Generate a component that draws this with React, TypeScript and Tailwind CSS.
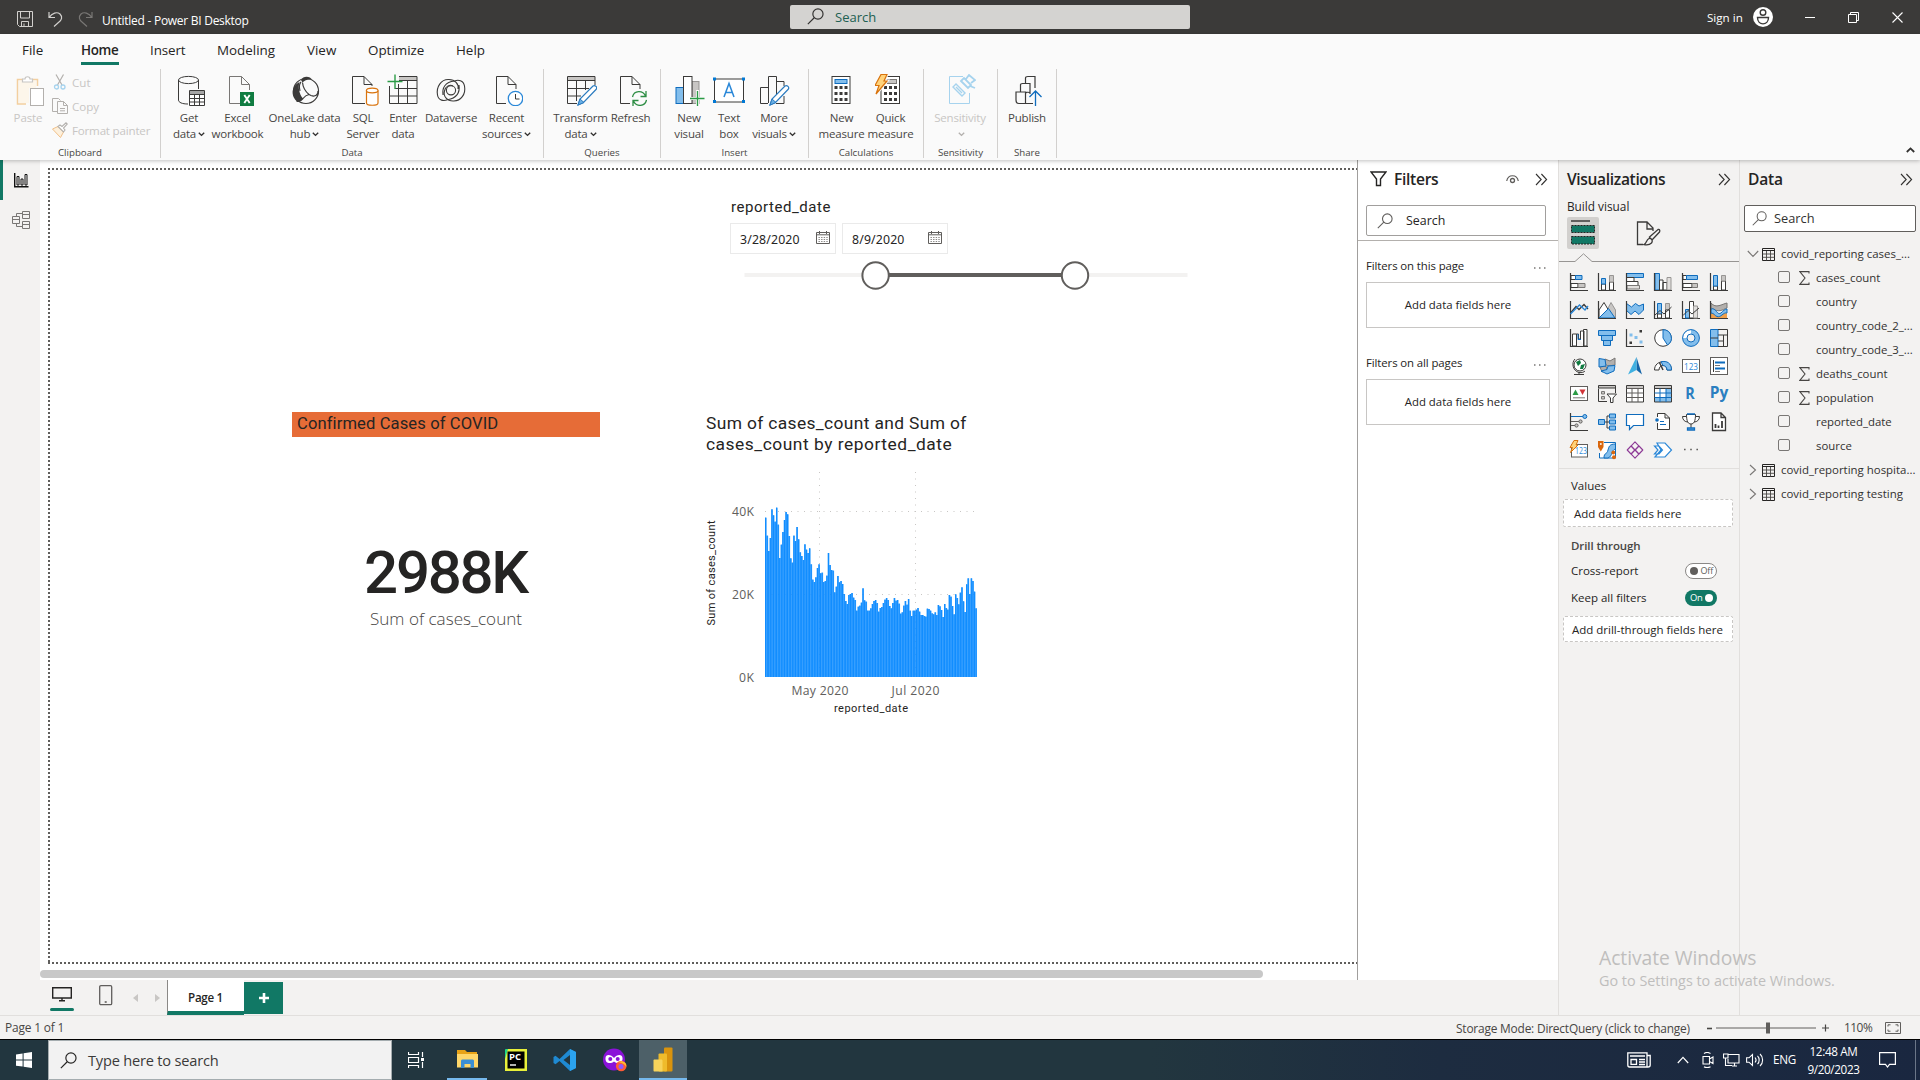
import React from "react";

type Kids = { children?: React.ReactNode };

const G = "#3b3a39";
const B = "#0078d4";
const LB = "#83beec";

/* ---------- shared glyphs ---------- */

function Svg({ w, h, className = "", children }: { w: number; h: number; className?: string } & Kids) {
  return (
    <svg width={w} height={h} viewBox={`0 0 ${w} ${h}`} fill="none" className={`shrink-0 ${className}`}>
      {children}
    </svg>
  );
}

function Magnifier({ color = "#323130", size = 16 }: { color?: string; size?: number }) {
  return (
    <svg width={size} height={size} viewBox="0 0 16 16" fill="none" stroke={color} strokeWidth="1.1" className="shrink-0">
      <circle cx="10.3" cy="5.7" r="4.8" />
      <path d="M6.8 9.2 L0.8 15.2" />
    </svg>
  );
}

function Caret({ color = "#323130" }: { color?: string }) {
  return (
    <svg width="7" height="5" viewBox="0 0 7 5" fill="none" stroke={color} strokeWidth="1.4" className="ml-[2px] inline-block align-middle">
      <path d="M0.8 0.8 L3.5 3.4 L6.2 0.8" />
    </svg>
  );
}

function DoubleChevron() {
  return (
    <Svg w={13} h={13}>
      <path d="M1 1 L6.2 6.5 L1 12 M6.4 1 L11.6 6.5 L6.4 12" stroke="#323130" strokeWidth="1.1" />
    </Svg>
  );
}

function TableGlyph() {
  return (
    <Svg w={13} h={13}>
      <path d="M0.5 0.5 H12.5 V12.5 H0.5 Z" stroke="#252423" />
      <path d="M0.5 2.5 H12.5" stroke="#252423" />
      <path d="M0.5 6 H12.5 M0.5 9.3 H12.5 M4.5 3 V12.5 M8.5 3 V12.5" stroke="#484644" strokeWidth="0.9" />
    </Svg>
  );
}

/* ---------- ribbon icons, 32 x 32 ---------- */

const ribbonIcons: Record<string, React.ReactNode> = {
  get: (
    <>
      <path d="M5.5 6 V26 C5.5 28.4 9 30 15 30 M25.5 6 V15" stroke={G} />
      <ellipse cx="15.5" cy="6" rx="10" ry="3.6" stroke={G} />
      <path d="M16.5 16.5 H31.5 V31.5 H16.5 Z" fill="#fff" stroke={G} />
      <path d="M17 17 H31 V20 H17 Z" fill="#a6a6a6" />
      <path d="M16.5 20.5 H31.5 M16.5 24.5 H31.5 M16.5 28 H31.5 M21.5 20.5 V31.5 M26.5 20.5 V31.5" stroke={G} />
    </>
  ),
  excel: (
    <>
      <path d="M18 29.5 H7.5 V2.5 H19.5 L27.5 10.5 V16 M19.5 2.5 V10.5 H27.5" stroke="#797775" />
      <rect x="18" y="18" width="14" height="14" fill="#107c41" />
      <path d="M22.3 21 L27.7 29 M27.7 21 L22.3 29" stroke="#fff" strokeWidth="1.9" />
    </>
  ),
  lake: (
    <>
      <circle cx="17" cy="17" r="12.5" stroke={G} strokeWidth="1.2" />
      <path d="M12 6 C14 1.5 21 1.5 23.5 6 C20 5 16 6 13.5 8.5 Z" fill={G} />
      <path d="M10.5 8 C9 13 10 20 14 24.5 C12 27 9.5 28 7.5 27 C0.5 20 4 11 10.5 8 Z" fill={G} />
      <path d="M13.5 8.5 C14 14 17 18 20 20.5 C17.5 21 15.5 22.5 14 24.5 C11.5 27.5 9.5 28 7.5 27 M29 17 C29.5 21 26 23 22 21.5 L20 20.5 M12 8 C10 10 10 13 11 17" stroke={G} strokeWidth="1.2" />
    </>
  ),
  sql: (
    <>
      <path d="M18 29.5 H5.5 V2.5 H17 L25 10.5 V12 M17 2.5 V10.5 H25" stroke={G} />
      <path d="M19.5 16.5 V29 C19.5 32 31 32 31 29 V16.5" fill="#fff" stroke="#d9730d" strokeWidth="1.2" />
      <ellipse cx="25.2" cy="16.5" rx="5.8" ry="2.3" fill="#fff" stroke="#d9730d" strokeWidth="1.2" />
    </>
  ),
  enter: (
    <>
      <path d="M12 2.5 H30 V6 H12 Z" fill="#c8c6c4" />
      <path d="M12 2.5 H30 V29.5 H2.5 V12 M12 6.5 H30 M8 14.5 H30 M2.5 22 H30 M11.5 10 V29.5 M20.5 6.5 V29.5" stroke={G} />
      <path d="M8 0.5 V15 M0.5 7.5 H15.5" stroke="#2b9b46" strokeWidth="1.4" />
    </>
  ),
  dv: (
    <>
      <path d="M14 5.5 C6 5 1 13 2.5 21 C3.5 27 9 27 12.5 25.8" stroke={G} strokeWidth="1.1" />
      <path d="M18 27 C26 27.5 31 20 29.5 12 C28.5 6 23 5.5 19.5 7" stroke={G} strokeWidth="1.1" />
      <path d="M14 5.5 C20 5.5 24 10 23 15 M18 27 C12 27 8 22 9.5 17 C10.5 12 15 10 18 12 M8 21 C7 14 10 8 19.5 7 M24 11 C25 18 22 24 12.5 25.8" stroke={G} strokeWidth="1.1" />
      <circle cx="16" cy="16.3" r="4.6" stroke={G} strokeWidth="1.1" />
    </>
  ),
  recent: (
    <>
      <path d="M15 29.5 H5.5 V2.5 H17 L25 10.5 V15 M17 2.5 V10.5 H25" stroke={G} />
      <circle cx="24.5" cy="24.5" r="7.2" fill="#fff" stroke="#2b88d8" strokeWidth="1.3" />
      <path d="M24.5 20 V25 H28.5" stroke={G} />
    </>
  ),
  transform: (
    <>
      <path d="M3 3 H30 V6 H3 Z" fill="#c8c6c4" />
      <path d="M30 11 V2.5 H2.5 V29.5 H12 M2.5 6.5 H30 M2.5 14.5 H24 M2.5 22 H16 M11.5 6.5 V27 M20.5 6.5 V16" stroke={G} />
      <path d="M13 31 L15 25 L28 12 C30 10.5 33 13.5 31 15.5 L18.5 28.5 Z" fill="#fff" stroke="#2b7bbf" strokeWidth="1.2" />
      <path d="M13 31 L15 25 L19 28.5 Z" fill="#69afe5" stroke="#2b7bbf" />
    </>
  ),
  refresh: (
    <>
      <path d="M15 29.5 H5.5 V2.5 H17 L25 10.5 V15 M17 2.5 V10.5 H25" stroke={G} />
      <path d="M17.5 23 C19 16 28 16 30.5 22 M31 17 V22.5 H25.5 M31.5 26 C30 33 21 33 18.5 27 M18 32 V26.5 H23.5" stroke="#2d8d44" strokeWidth="1.3" />
    </>
  ),
  visual: (
    <>
      <rect x="3" y="13.5" width="7.5" height="16" fill={LB} stroke="#0f6cbd" />
      <rect x="19" y="7.5" width="7" height="22" fill="#c8c6c4" stroke="#979593" />
      <rect x="10.5" y="2.5" width="8.5" height="27" fill="#fff" stroke={G} />
      <path d="M24.5 16 V32 M17 24.5 H32" stroke="#fafafa" strokeWidth="3" />
      <path d="M24.5 17 V32 M17 24.5 H31.5" stroke="#2b9b46" strokeWidth="1.3" />
    </>
  ),
  text: (
    <>
      <rect x="1.5" y="5" width="29" height="23" fill="#fff" stroke={G} />
      <path d="M0 3.5 H3 V6.5 H0 Z M29 3.5 H32 V6.5 H29 Z M0 26 H3 V29 H0 Z M29 26 H32 V29 H29 Z" fill={B} />
      <path d="M11 23 L16 9.5 L21 23 M12.7 18.5 H19.3" stroke="#2b88d8" strokeWidth="1.5" />
    </>
  ),
  more: (
    <>
      <path d="M10 29.5 H2.5 V13.5 H10.5 M10.5 29 V2.5 H18.5 V20 M18.5 7.5 H26 V12 M26 22 V29.5 H18" stroke={G} />
      <path d="M12 31 L14 25 L27 12 C29 10.5 32 13.5 30 15.5 L17.5 28.5 Z" fill="#fff" stroke="#2b7bbf" strokeWidth="1.2" />
      <path d="M12 31 L14 25 L18 28.5 Z" fill="#69afe5" stroke="#2b7bbf" />
    </>
  ),
  calc: (
    <>
      <rect x="6" y="2.5" width="18" height="27" fill="#fff" stroke={G} />
      <rect x="9" y="5.5" width="12" height="4" fill={LB} stroke="#0f6cbd" />
      <path d="M8.5 13.5 H21.5 M8.5 19.5 H21.5 M8.5 25.5 H21.5" stroke={G} strokeWidth="3" strokeDasharray="3 2" />
    </>
  ),
  quick: (
    <>
      <rect x="6" y="2.5" width="18.5" height="27" fill="#fff" stroke={G} />
      <rect x="12" y="5.5" width="9.5" height="4" fill="#c8c6c4" stroke="#797775" />
      <path d="M9 13.5 H22 M9 19.5 H22 M9 25.5 H22" stroke={G} strokeWidth="3" strokeDasharray="3 2" />
      <path d="M6 0.5 H12 L9 7 H12 L1 20 L4 11.5 H0 Z" fill="#ffd27a" stroke="#fafafa" strokeWidth="3" />
      <path d="M6 0.5 H12 L9 7 H12 L1 20 L4 11.5 H0 Z" fill="#ffd27a" stroke="#d9730d" strokeWidth="1.2" />
    </>
  ),
  sens: (
    <>
      <path d="M19 2.5 H5.5 V29.5 H25.5 V19" stroke="#a6d3ee" />
      <path d="M9 13 L12 10 L21 19 L18 22 Z M12 13 L18 19" stroke="#a6d3ee" strokeWidth="1.4" />
      <path d="M17 7 L24 14 L27 11 L20 4 Z M22 5 L25 1 L31 6 L27 9 M26 12 L31 14" stroke="#a6d3ee" strokeWidth="1.8" />
    </>
  ),
  publish: (
    <>
      <path d="M22 29.5 H8 C5 29.5 5 27 5 26 V18 H14.5 V29 M9.5 18 V10.5 C9.5 9.5 10.5 9.5 11.5 9.5 H19 V20 M14.5 9.5 V4 C14.5 2.5 16 2.5 17 2.5 H24 V14 M14.5 20 C14.5 18 16 18 19 18.5" stroke={G} strokeWidth="1.2" />
      <path d="M24.5 32 V17 M18.5 23 L24.5 17 L30.5 23" stroke="#0f6cbd" strokeWidth="1.3" />
    </>
  ),
};

function RibbonItem({ icon, a, b, caret, w, muted }: { icon: string; a: string; b?: string; caret?: boolean; w: string; muted?: boolean }) {
  return (
    <div className={`flex shrink-0 flex-col items-center ${w} ${muted ? "text-[#c8c6c4]" : "text-[#484644]"}`}>
      <Svg w={32} h={32}>{ribbonIcons[icon]}</Svg>
      <span className="mt-1 h-4 text-[11.5px] leading-4 tracking-[-0.2px] whitespace-nowrap">{a}</span>
      <span className="h-4 text-[11.5px] leading-4 tracking-[-0.2px] whitespace-nowrap">
        {b}
        {caret && <Caret color={muted ? "#b3b0ad" : "#323130"} />}
      </span>
    </div>
  );
}

function RibbonGroup({ label, className, items, children }: { label: string; className: string; items: string } & Kids) {
  return (
    <div className={`flex h-[89px] shrink-0 flex-col border-r border-[#d2d0ce] ${className}`}>
      <div className={`flex h-[79px] shrink-0 pt-[5px] ${items}`}>{children}</div>
      <div className="text-center text-[9.7px] leading-[10px] text-[#484644]">{label}</div>
    </div>
  );
}

function TitleBar() {
  return (
    <header className="flex h-[34px] shrink-0 items-center bg-[#3b3a39] text-white">
      <div className="flex w-[790px] items-center pt-[3px] pl-[17px]">
        <Svg w={16} h={16}>
          <path d="M0.5 0.5 H15.5 V15.5 H2.5 L0.5 13.5 Z M3.5 0.5 V7 H12.5 V0.5 M4.5 15.5 V10.5 H11.5 V15.5 M7 15 V12.5" stroke="#d2d0ce" />
        </Svg>
        <Svg w={15} h={16} className="ml-[15px]">
          <path d="M1 1 V6.5 H7 M1.2 6.3 C4 2 9 0.5 12 3 C15 6 13.5 9 11 11 L6 15.5" stroke="#d2d0ce" strokeWidth="1.2" />
        </Svg>
        <Svg w={15} h={16} className="ml-[15px]">
          <path d="M14 1 V6.5 H8 M13.8 6.3 C11 2 6 0.5 3 3 C0 6 1.5 9 4 11 L9 15.5" stroke="#797775" strokeWidth="1.2" />
        </Svg>
        <span className="mt-[5px] ml-[9px] text-[12px] leading-4 tracking-[-0.27px]">Untitled - Power BI Desktop</span>
      </div>
      <div className="mb-px flex h-6 w-[400px] items-center rounded-[2px] bg-[#d4d3d1] pl-[17px]">
        <Magnifier size={17} />
        <span className="ml-[11px] text-[13px] leading-4 text-[#215f51]">Search</span>
      </div>
      <div className="ml-[517px] flex items-center">
        <span className="w-[37px] pt-px text-[11.6px] leading-4 whitespace-nowrap">Sign in</span>
        <Svg w={20} h={20} className="-mt-px ml-[9px]">
          <circle cx="10" cy="10" r="10" fill="#fff" />
          <circle cx="10" cy="5.5" r="2.8" stroke={G} strokeWidth="1.4" />
          <path d="M4.5 10.5 H15.5 C15.5 19 4.5 19 4.5 10.5 Z" stroke={G} strokeWidth="1.4" />
        </Svg>
        <Svg w={10} h={10} className="ml-8">
          <path d="M0 5.5 H10" stroke="#fff" />
        </Svg>
        <Svg w={11} h={11} className="ml-[33px]">
          <path d="M0.5 2.5 H8.5 V10.5 H0.5 Z M2.5 2.5 V0.5 H10.5 V8.5 H8.5" stroke="#fff" />
        </Svg>
        <Svg w={11} h={11} className="ml-[33px]">
          <path d="M0.5 0.5 L10.5 10.5 M10.5 0.5 L0.5 10.5" stroke="#fff" strokeWidth="1.1" />
        </Svg>
      </div>
    </header>
  );
}

function Ribbon() {
  return (
    <section className="relative z-10 h-[126px] shrink-0 bg-[#fafafa] shadow-[0_1px_4px_rgba(0,0,0,0.25)]">
      <nav className="flex h-[35px] text-[13.4px] leading-[18px] text-[#252423] whitespace-nowrap">
        <span className="mt-[7px] ml-[22px] w-[59px]">File</span>
        <span className="mt-[7px] h-6 w-[38px] border-b-[3px] border-[#117865] font-semibold tracking-[-0.35px]">Home</span>
        <span className="mt-[7px] ml-[31px] w-[67px] tracking-[-0.1px]">Insert</span>
        <span className="mt-[7px] w-[90px]">Modeling</span>
        <span className="mt-[7px] w-[61px]">View</span>
        <span className="mt-[7px] w-[88px]">Optimize</span>
        <span className="mt-[7px]">Help</span>
      </nav>
      <div className="flex">
        <RibbonGroup label="Clipboard" className="w-[161px]" items="pl-[12px]">
          <div className="flex w-[32px] flex-col items-center text-[#c8c6c4]">
            <Svg w={32} h={32}>
              <path d="M14 30 H5.5 V5.5 H11 M20 5.5 H25.5 V12" stroke="#f3cf9f" strokeWidth="1.5" />
              <path d="M7 7 H24 V14 H17 V29 H7 Z" fill="#fdf6ea" />
              <path d="M10.5 8 V5 H13 C13 2 18 2 18 5 H20.5 V8 Z" fill="#fff" stroke="#c8c6c4" strokeWidth="1.2" />
              <rect x="18.5" y="14.5" width="13" height="17" fill="#fff" stroke="#b3b0ad" />
            </Svg>
            <span className="mt-1 text-[11.5px] leading-4 tracking-[-0.1px]">Paste</span>
          </div>
          <div className="flex flex-col pl-2 text-[11.6px] leading-6 text-[#c8c6c4]">
            <div className="-mt-1 flex h-6 items-center gap-[4px]">
              <Svg w={16} h={16}>
                <path d="M4 0.5 L10 11 M11.5 0.5 L5.5 11" stroke="#b3b0ad" strokeWidth="1.2" />
                <circle cx="4.5" cy="13" r="2" stroke="#a6d3ee" strokeWidth="1.3" />
                <circle cx="11" cy="13" r="2" stroke="#a6d3ee" strokeWidth="1.3" />
              </Svg>
              <span className="pt-px">Cut</span>
            </div>
            <div className="flex h-6 items-center gap-[4px]">
              <Svg w={16} h={16}>
                <path d="M5 13.5 H0.5 V0.5 H6.5 L8.5 2.5 M5.5 3.5 H11.5 L15.5 7.5 V15.5 H5.5 Z M11.5 3.5 V7.5 H15.5 M8 10.5 H13 M8 12.8 H13" stroke="#b3b0ad" />
              </Svg>
              <span className="pt-px">Copy</span>
            </div>
            <div className="flex h-6 items-center gap-[4px] tracking-[-0.2px]">
              <Svg w={16} h={16}>
                <path d="M0.5 7 L6 4.5 L11.5 10 L8.5 15.5 Z" fill="#fdf0dc" stroke="#f0c08a" />
                <path d="M6 4.5 L8 3 L10 4.5 L14 0.8 L15.3 2 L11.5 6 L13 8 L11.5 10 Z" fill="#fff" stroke="#b3b0ad" strokeWidth="1.1" />
              </Svg>
              <span className="pt-px whitespace-nowrap">Format painter</span>
            </div>
          </div>
        </RibbonGroup>
        <RibbonGroup label="Data" className="w-[383px]" items="pl-[6px]">
          <RibbonItem w="w-[44px]" icon="get" a="Get" b="data" caret />
          <RibbonItem w="w-[53px]" icon="excel" a="Excel" b="workbook" />
          <RibbonItem w="w-[81px]" icon="lake" a="OneLake data" b="hub" caret />
          <RibbonItem w="w-[36px]" icon="sql" a="SQL" b="Server" />
          <RibbonItem w="w-[44px]" icon="enter" a="Enter" b="data" />
          <RibbonItem w="w-[52px]" icon="dv" a="Dataverse" />
          <RibbonItem w="w-[59px]" icon="recent" a="Recent" b="sources" caret />
        </RibbonGroup>
        <RibbonGroup label="Queries" className="w-[117px]" items="pl-[6px]">
          <RibbonItem w="w-[61px]" icon="transform" a="Transform" b="data" caret />
          <RibbonItem w="w-[39px]" icon="refresh" a="Refresh" />
        </RibbonGroup>
        <RibbonGroup label="Insert" className="w-[148px]" items="pl-[13px]">
          <RibbonItem w="w-[30px]" icon="visual" a="New" b="visual" />
          <RibbonItem w="w-[50px]" icon="text" a="Text" b="box" />
          <RibbonItem w="w-[40px]" icon="more" a="More" b="visuals" caret />
        </RibbonGroup>
        <RibbonGroup label="Calculations" className="w-[115px]" items="gap-1 pl-[10px]">
          <RibbonItem w="w-[45px]" icon="calc" a="New" b="measure" />
          <RibbonItem w="w-[45px]" icon="quick" a="Quick" b="measure" />
        </RibbonGroup>
        <RibbonGroup label="Sensitivity" className="w-[74px]" items="pl-[8px]">
          <RibbonItem w="w-[56px]" icon="sens" a="Sensitivity" caret muted />
        </RibbonGroup>
        <RibbonGroup label="Share" className="w-[59px]" items="pl-[8px]">
          <RibbonItem w="w-[42px]" icon="publish" a="Publish" />
        </RibbonGroup>
        <div className="flex grow items-end justify-end pr-[5px] pb-[5px]">
          <Svg w={9} h={6}>
            <path d="M0.8 5 L4.5 1.4 L8.2 5" stroke="#323130" strokeWidth="1.8" />
          </Svg>
        </div>
      </div>
    </section>
  );
}

/* ---------- report canvas ---------- */

const tops = [
  353, 407, 453, 414, 328, 346, 365, 323, 374, 474, 434, 396, 360, 336, 343, 408, 475, 488, 407, 423, 381, 418, 457, 468, 480, 433, 449,
  459, 445, 493, 539, 546, 532, 504, 493, 520, 518, 546, 543, 527, 459, 495, 510, 512, 577, 560, 528, 547, 543, 552, 582, 603, 612, 585,
  582, 579, 593, 600, 632, 620, 617, 608, 565, 601, 605, 632, 632, 625, 612, 603, 600, 609, 635, 624, 621, 609, 599, 594, 600, 618, 625,
  609, 594, 602, 600, 611, 641, 637, 617, 603, 614, 597, 632, 648, 632, 632, 629, 624, 635, 645, 645, 648, 650, 626, 627, 632, 640, 643,
  637, 645, 615, 619, 630, 651, 612, 624, 629, 585, 590, 618, 643, 583, 594, 613, 578, 562, 604, 636, 553, 535, 582, 535, 543, 575, 625,
];

function Chart() {
  const pitch = 212 / tops.length;
  return (
    <div className="absolute top-[412px] left-[700px] w-[300px] font-[Roboto,sans-serif] text-[#252423]">
      <div className="h-[43px] pt-[1px] pl-[6px] text-[17.4px] leading-[21px] tracking-[0.36px] whitespace-nowrap">
        Sum of cases_count and Sum of
        <br />
        <span className="tracking-[0.52px]">cases_count by reported_date</span>
      </div>
      <svg width="300" height="270" viewBox="700 460 300 270" className="mt-[5px] block">
        <g stroke="#c8c6c4" strokeWidth="1" strokeDasharray="1 5.5">
          <path d="M819.5 472 V677 M915.5 472 V677 M765 511.5 H978 M765 594.5 H978" />
        </g>
        {tops.map((t, i) => {
          const h = (831 - t) / 3;
          return (
            <g key={i}>
              <rect x={765 + i * pitch} y={677 - h} width={pitch} height={h} fill="#118dff" fillOpacity="0.8" />
              <rect x={765 + i * pitch} y={677 - h} width={pitch * 0.75} height={h} fill="#118dff" />
            </g>
          );
        })}
        <g fontFamily="Open Sans, sans-serif" fontSize="12.2" fill="#605e5c">
          <text x="754" y="515.5" textAnchor="end" textLength="22">40K</text>
          <text x="754" y="599" textAnchor="end" textLength="22">20K</text>
          <text x="754" y="682" textAnchor="end" textLength="15">0K</text>
          <text x="820" y="695" textAnchor="middle" textLength="57">May 2020</text>
          <text x="915.5" y="695" textAnchor="middle" textLength="48">Jul 2020</text>
        </g>
        <g fontFamily="Roboto, sans-serif" fontSize="11" fill="#252423">
          <text x="871" y="712" textAnchor="middle" textLength="74">reported_date</text>
          <text x="715" y="573" textAnchor="middle" textLength="105" transform="rotate(-90 715 573)">Sum of cases_count</text>
        </g>
      </svg>
    </div>
  );
}

function DateBox({ value }: { value: string }) {
  return (
    <div className="flex h-[31px] w-[106px] justify-between border border-[#eaeaea] pr-[5px] pl-[9px]">
      <span className="mt-2 font-['Noto_Sans',sans-serif] text-[12.3px] leading-4 tracking-[0.15px]">{value}</span>
      <Svg w={14} h={13} className="mt-[7px]">
        <path d="M0.5 1.5 H13.5 V12.5 H0.5 Z M0.5 3.8 H13.5 M3.5 0 V3 M10.5 0 V3" stroke="#605e5c" />
        <path d="M2.5 6.5 H12 M2.5 8.5 H12 M2.5 10.5 H12" stroke="#8a8886" strokeDasharray="1.4 1.2" />
      </Svg>
    </div>
  );
}

function Canvas() {
  return (
    <main className="relative w-[1317px] shrink-0 overflow-hidden bg-white">
      <div className="absolute top-[8px] left-[8px] h-[2px] w-[1309px] bg-[repeating-linear-gradient(90deg,#605e5c_0_2px,transparent_2px_4px)]" />
      <div className="absolute top-[802px] left-[8px] h-[2px] w-[1309px] bg-[repeating-linear-gradient(90deg,#605e5c_0_2px,transparent_2px_4px)]" />
      <div className="absolute top-[8px] left-[8px] h-[796px] w-[2px] bg-[repeating-linear-gradient(180deg,#605e5c_0_2px,transparent_2px_4px)]" />
      <div className="absolute top-[810px] left-0 h-2 w-[1223px] rounded bg-[#c8c8c8]" />

      <div className="absolute -top-[160px] -left-[40px]">
        <div className="absolute top-[197px] left-[730px] w-[470px] text-[#252423]">
          <div className="pl-px font-[Roboto,sans-serif] text-[15px] leading-5 tracking-[0.55px]">reported_date</div>
          <div className="mt-[6px] flex gap-[6px]">
            <DateBox value="3/28/2020" />
            <DateBox value="8/9/2020" />
          </div>
          <svg width="470" height="32" viewBox="730 259 470 32" fill="none" className="mt-[5px] block">
            <path d="M744.5 275 H1187.5" stroke="#f3f2f1" strokeWidth="4" />
            <path d="M875 275 H1074" stroke="#605e5c" strokeWidth="4" />
            <circle cx="875.6" cy="275.5" r="13.2" fill="#fff" stroke="#605e5c" strokeWidth="2" />
            <circle cx="1075" cy="275.5" r="13.2" fill="#fff" stroke="#605e5c" strokeWidth="2" />
          </svg>
        </div>

        <div className="absolute top-[412px] left-[292px] w-[308px]">
          <div className="h-[25px] bg-[#e66c37] pl-[5px] font-[Roboto,sans-serif] text-[16.6px] leading-[23px] tracking-[0.1px] text-[#252423]">
            Confirmed Cases of COVID
          </div>
          <div className="mt-[100px] pr-px text-center font-[Roboto,sans-serif] text-[60px] leading-[72px] font-medium tracking-[-2.3px] text-[#252423]">2988K</div>
          <div className="-mt-px text-center text-[17.1px] leading-[22px] font-light text-[#484644]">Sum of cases_count</div>
        </div>

        <Chart />
      </div>
    </main>
  );
}

function LeftRail() {
  return (
    <aside className="w-10 shrink-0 bg-[#f3f2f1]">
      <div className="flex h-10 items-start border-l-[3px] border-[#117865] pt-[13px] pl-[11px]">
        <Svg w={15} h={15}>
          <path d="M0.7 0 V13.8 H14.5" stroke="#111" strokeWidth="1.4" />
          <path d="M3 3.5 H5 V12 H3 Z M7 6 H9 V12 H7 Z M11 1.5 H13 V12 H11 Z" stroke="#111" />
        </Svg>
      </div>
      <div className="pt-[11px] pl-[12px]">
        <Svg w={18} h={18}>
          <path d="M0.5 5.5 H7.5 V12.5 H0.5 Z M0.5 8.5 H7.5 M10.5 0.5 H17.5 V7.5 H10.5 Z M10.5 3.5 H17.5 M10.5 10.5 H17.5 V17.5 H10.5 Z M10.5 13.5 H17.5 M4.5 5 V2.5 H10 M4.5 13 V15.5 H10" stroke="#797775" />
        </Svg>
      </div>
    </aside>
  );
}

/* ---------- panes ---------- */

function FilterSection({ title, className }: { title: string; className: string }) {
  return (
    <div className={className}>
      <div className="flex h-4 items-center justify-between pr-1">
        <span className="text-[11.4px] leading-4 tracking-[-0.1px]">{title}</span>
        <Svg w={12} h={2} className="mt-1">
          <path d="M0 1 H12" stroke="#797775" strokeWidth="1.3" strokeDasharray="1.5 3.5" />
        </Svg>
      </div>
      <div className="mt-2 flex h-[46px] items-center justify-center border border-[#c8c6c4] text-[11.4px]">Add data fields here</div>
    </div>
  );
}

function Filters() {
  return (
    <aside className="flex h-[820px] w-[201px] shrink-0 flex-col border-l border-[#a19f9d] bg-white text-[#252423]">
      <div className="flex h-[38px] items-center pl-3">
        <Svg w={17} h={16}>
          <path d="M1 1 H16 L10.5 8 V14.5 H6.5 V8 Z" stroke="#252423" strokeWidth="1.4" />
        </Svg>
        <span className="ml-[7px] w-[112px] text-[15.6px] leading-5 font-semibold tracking-[-0.3px]">Filters</span>
        <Svg w={13} h={9}>
          <path d="M0.7 6 C2 -1 11 -1 12.3 6" stroke="#605e5c" strokeWidth="1.2" />
          <circle cx="6.5" cy="5.5" r="2" stroke="#605e5c" strokeWidth="1.3" />
        </Svg>
        <div className="ml-[16px]">
          <DoubleChevron />
        </div>
      </div>
      <div className="mt-[7px] ml-2 flex h-[31px] w-[180px] items-center rounded-[2px] border border-[#a19f9d] pl-[10px]">
        <Magnifier color="#605e5c" />
        <span className="mt-px ml-[13px] text-[12.4px]">Search</span>
      </div>
      <div className="mt-1 h-px bg-[#b3b0ad]" />
      <FilterSection title="Filters on this page" className="mt-[17px] ml-2 w-[184px]" />
      <FilterSection title="Filters on all pages" className="mt-[27px] ml-2 w-[184px]" />
    </aside>
  );
}

const ax = <path d="M0.5 0 V17.5 H18" stroke={G} strokeWidth="1.2" />;
const BS = "#0f6cbd";

const vizIcons: React.ReactNode[] = [
  <>{ax}<path d="M1 2.5 H5.5 V6.5 H1 Z" fill="#fff" stroke={G} /><path d="M5.5 2.5 H12 V6.5 H5.5 Z" fill={LB} stroke={BS} /><path d="M1 10.5 H8 V14.5 H1 Z" fill="#fff" stroke={G} /><path d="M8 10.5 H15 V14.5 H8 Z" fill="#c8c6c4" stroke="#797775" /></>,
  <>{ax}<path d="M3.5 11 H7.5 V17 H3.5 Z" fill="#fff" stroke={G} /><path d="M3.5 5.5 H7.5 V11 H3.5 Z" fill={LB} stroke={BS} /><path d="M11.5 9 H15.5 V17 H11.5 Z" fill="#fff" stroke={G} /><path d="M11.5 2.5 H15.5 V9 H11.5 Z" fill="#c8c6c4" stroke="#979593" /></>,
  <><path d="M0.5 0.5 H17.5 V4.5 H0.5 Z" fill={LB} stroke={BS} /><path d="M0.5 4.5 H8 V8.5 H0.5 Z M0.5 8.5 H12 V12.5 H0.5 Z" fill="#fff" stroke={G} /><path d="M1 12.5 H13.5 V16 H1 Z" fill="#e1dfdd" stroke="#797775" />{ax}</>,
  <><path d="M1 0.5 H5.5 V17 H1 Z" fill={LB} stroke={BS} /><path d="M5.5 7 H9 V17 H5.5 Z M9 9.5 H13 V17 H9 Z" fill="#fff" stroke={G} /><path d="M13 4.5 H17 V17 H13 Z" fill="#e1dfdd" stroke="#979593" />{ax}</>,
  <>{ax}<path d="M1 2.5 H4.5 V6.5 H1 Z M1 10.5 H10 V14.5 H1 Z" fill="#fff" stroke={G} /><path d="M4.5 2.5 H15.5 V6.5 H4.5 Z" fill={LB} stroke={BS} /><path d="M10 10.5 H15.5 V14.5 H10 Z" fill="#c8c6c4" stroke="#797775" /></>,
  <>{ax}<path d="M3.5 13 H7.5 V17 H3.5 Z M11.5 8 H15.5 V17 H11.5 Z" fill="#fff" stroke={G} /><path d="M3.5 2.5 H7.5 V13 H3.5 Z" fill={LB} stroke={BS} /><path d="M11.5 2.5 H15.5 V8 H11.5 Z" fill="#c8c6c4" stroke="#979593" /></>,
  <>{ax}<path d="M0.5 12 L6 5.5 L9 8.5 L14 3.5 L18 8" stroke={G} strokeWidth="1.3" /><path d="M0.5 13 L9.5 4 L15 9 L18 5" stroke="#2b88d8" strokeWidth="1.3" /></>,
  <><path d="M9 9 L13 1.5 L17.5 9 V17 H9 Z" fill="#c8c6c4" stroke="#979593" /><path d="M1 9 L6 1.5 L11 10 L4 17 H1 Z" fill="#fff" stroke={G} /><path d="M1 17 L10.5 7.5 L17 17 Z" fill={LB} stroke={BS} />{ax}</>,
  <><path d="M0.5 2.5 L5.5 6 L9.5 2.5 L13 5 L17.5 3 V9 L13 13.5 L9 10 L5 13.5 L0.5 9.5 Z" fill={LB} stroke={BS} />{ax}</>,
  <>{ax}<path d="M3.5 2.5 H7.5 V14 H3.5 Z" fill={LB} stroke={BS} /><path d="M11.5 2.5 H15.5 V9 H11.5 Z" fill="#c8c6c4" stroke="#979593" /><path d="M11.5 9 H15.5 V17 H11.5 Z M3.5 13 H7.5 V17 H3.5 Z" fill="#fff" stroke={G} /><path d="M1 14 L6 9.5 L10 13 L17.5 6" stroke={G} /></>,
  <>{ax}<path d="M3.5 8.5 H7.5 V17 H3.5 Z" fill={LB} stroke={BS} /><path d="M7.5 0.5 H11.5 V17 H7.5 Z" fill="#fff" stroke={G} /><path d="M11.5 5 H15.5 V17 H11.5 Z" fill="#e1dfdd" stroke="#979593" /><path d="M1 14.5 L6 9.5 L10 13 L17 7" stroke={G} /></>,
  <><path d="M1 2 C6 8 12 3 17 2 V7 C12 9 9 12 1 7 Z" fill="#b3b0ad" stroke="#797775" /><path d="M1 12 H17 V17 H1 Z" fill="#f0a04b" /><path d="M1 8 C6 6 7 15 11 12 C13 10 15 8 17 8 V12 C13 11 11 17 7 15.5 C5 15 4 12 1 12 Z" fill={LB} stroke={BS} />{ax}</>,
  <>{ax}<path d="M2.5 5 H6.5 V17 H2.5 Z M6.5 5 H8.5 V10 H10.5 V2 H14 V17 M10.5 2 V9 M13.5 0.5 H17 V17 H13.5 Z" stroke={G} fill="#fff" /><path d="M8 5 V10.5 H11" stroke={BS} /></>,
  <><path d="M0.5 1.5 H17.5 V6.5 H0.5 Z M3.5 6.5 H14.5 V11.5 H3.5 Z M5.5 11.5 H12.5 V16.5 H5.5 Z" fill={LB} stroke={BS} /></>,
  <>{ax}<path d="M3.5 4.5 H6.5 V7.5 H3.5 Z M8.5 7 H11.5 V10 H8.5 Z M13.5 11.5 H16.5 V14.5 H13.5 Z" fill={LB} /><path d="M13.5 1 H16 V3.5 H13.5 Z M3.5 12.5 H6 V15 H3.5 Z" fill={G} /></>,
  <><circle cx="9" cy="9" r="8.3" fill="#fff" stroke={G} /><path d="M9 0.7 A8.3 8.3 0 0 1 13.5 16 L9 9 Z" fill={LB} stroke={BS} /></>,
  <><circle cx="9" cy="9" r="6.2" stroke={LB} strokeWidth="4.4" /><path d="M9 3 A6 6 0 0 0 3 9" stroke="#fff" strokeWidth="4.2" /><circle cx="9" cy="9" r="8.4" stroke={BS} /><circle cx="9" cy="9" r="4" fill="#f3f2f1" stroke={BS} /></>,
  <><path d="M0.5 0.5 H8 V17.5 H0.5 Z" fill={LB} stroke={BS} /><path d="M8 0.5 H17.5 V17.5 H8 M8 6 H17.5 M8 12 H14 M13.5 6 V17.5 M0.5 9 H8" stroke={G} /></>,
  <><circle cx="10" cy="8" r="6" fill="#fff" stroke={G} /><path d="M6 5 L10 3 L11 6 L8 9 Z M11 8 L15 7 L13 12 L10 12 Z" fill="#107c41" /><path d="M5 2 C1 6 3 14 9 15.5 C12 16 14 15 15 14 M9 15 V17.5 M4 17.5 H14" stroke={G} /></>,
  <><path d="M7 2 L12 4 L17 1 V8 L10 9 L7 7 Z M2 10 L8 9 L9 13 L4 15 Z" fill="#b3b0ad" stroke="#797775" /><path d="M1 1.5 L7 2.5 L8 9 L1 10 Z M10 9 L17 8.5 L16 14 L9 17 L3 14 L9 12.5 Z" fill={LB} stroke={BS} /></>,
  <><path d="M10.5 0 L16 17.5 L10.5 13 Z" fill="#1565a8" /><path d="M10.5 0 L2 17.5 L10.5 13 Z" fill="#41b1e1" /></>,
  <><path d="M0.5 13 C0.5 2 17.5 2 17.5 13 H13 C13 7 5 7 5 13 Z" fill="#fff" stroke={G} /><path d="M7 4.8 C13 3.5 17.5 6 17.5 13 H13 C13 10 11 8.5 9 8.5 Z" fill={LB} stroke={BS} /><path d="M9 13 L5.5 5.5" stroke={G} strokeWidth="1.5" /></>,
  <><rect x="0.5" y="2.5" width="17" height="13" fill="#fff" stroke="#605e5c" /><text x="9" y="12.6" textAnchor="middle" fontFamily="Open Sans" fontSize="9.5" textLength="14" lengthAdjust="spacingAndGlyphs" fill="#2b88d8">123</text></>,
  <><rect x="0.5" y="0.5" width="17" height="17" fill="#fff" stroke="#605e5c" /><path d="M3.5 3 V15" stroke={G} /><path d="M5 5.5 H15 M5 11.5 H15" stroke={BS} strokeWidth="2" /><path d="M5 8.5 H10 M5 14.5 H10" stroke="#797775" /></>,
  <><rect x="0.5" y="1.5" width="17" height="14" fill="#fff" stroke="#605e5c" /><path d="M2.5 10 L5.5 4.5 L8.5 10 Z" fill="#2b9b46" /><path d="M9.5 4.5 H15.5 L12.5 10 Z" fill="#d13438" /><path d="M3 12.8 H15" stroke="#797775" /></>,
  <><path d="M0.5 0.5 H17.5 V3 H0.5 Z" fill="#c8c6c4" stroke={G} /><path d="M9 16.5 H0.5 V3.5 M17.5 3 V8" stroke={G} /><path d="M3.5 6.5 H6.5 V9 H3.5 Z M3.5 11.5 H6.5 V14 H3.5 Z" fill="#c8c6c4" stroke="#797775" /><path d="M9 9 H18.5 L15 13 V17.5 H12.5 V13 Z" fill="#fff" stroke={G} /></>,
  <><path d="M0.5 0.5 H17.5 V17 H0.5 Z" fill="#fff" stroke={G} /><path d="M1 1 H17 V3 H1 Z" fill="#c8c6c4" /><path d="M0.5 3.5 H17.5 M0.5 8 H17.5 M0.5 12.5 H17.5 M6 3.5 V17 M12 3.5 V17" stroke="#605e5c" /></>,
  <><path d="M0.5 0.5 H17.5 V17 H0.5 Z" fill="#fff" /><path d="M12 3.5 H17.5 V17 H0.5 V12.5 H12 Z" fill={LB} /><path d="M1 1 H17 V3 H1 Z" fill="#c8c6c4" /><path d="M0.5 0.5 H17.5 V17 H0.5 Z M0.5 3.5 H17.5" stroke={G} /><path d="M0.5 8 H17.5 M0.5 12.5 H17.5 M6 3.5 V17 M12 3.5 V17" stroke={BS} /></>,
  <text x="8" y="14" textAnchor="middle" fontFamily="Open Sans" fontWeight="700" fontSize="16.5" textLength="9.5" lengthAdjust="spacingAndGlyphs" fill="#2b7fc0">R</text>,
  <text x="9" y="12.8" textAnchor="middle" fontFamily="Open Sans" fontWeight="700" fontSize="16.5" textLength="18.5" lengthAdjust="spacingAndGlyphs" fill="#2b7fc0">Py</text>,
  <>{ax}<path d="M1 3.5 H13" stroke={BS} /><circle cx="14.8" cy="3.5" r="2" fill={LB} stroke={BS} /><path d="M1 8.5 H9 M1 12.5 H5" stroke="#605e5c" /><circle cx="10.5" cy="8.5" r="1.6" fill="#c8c6c4" stroke="#605e5c" /><circle cx="6.5" cy="12.5" r="1.6" fill="#c8c6c4" stroke="#605e5c" /></>,
  <><path d="M6 9 H11 M9 3 V15 M9 3 H12 M9 15 H12" stroke={G} /><path d="M0.5 6.5 H6.5 V11.5 H0.5 Z M11.5 1 H17.5 V5 H11.5 Z M11.5 7 H17.5 V11 H11.5 Z M11.5 13 H17.5 V17 H11.5 Z" fill={LB} stroke={BS} /></>,
  <path d="M0.5 1.5 H17.5 V12.5 H7.5 L3.5 16.5 V12.5 H0.5 Z" fill="#fff" stroke={BS} strokeWidth="1.2" />,
  <><path d="M3.5 4 V0.5 H11 L15.5 5 V16.5 H3.5 V10 M11 0.5 V5 H15.5" fill="#fff" stroke={G} /><circle cx="3" cy="7" r="1.8" fill={BS} /><path d="M6 8.5 H10 M6 11.5 H12" stroke={BS} /></>,
  <><path d="M4.5 1.5 C4.5 8 6 11 9 11 C12 11 13.5 8 13.5 1.5 Z M4.5 3.5 H0.5 C0.5 7 3 9 6 9 M13.5 3.5 H17.5 C17.5 7 15 9 12 9 M9 11 V15" fill="#fff" stroke={G} /><path d="M5 1 H13 M5.5 15 H12.5 V17 H5.5 Z" fill={LB} stroke={BS} strokeWidth="1.3" /></>,
  <><path d="M2.5 0 H11 L15.5 4.5 V17.5 H2.5 Z M11 0 V4.5 H15.5" fill="#fff" stroke={G} strokeWidth="1.3" /><path d="M5.5 15 V11 M8.5 15 V12.5 M12 15 V8" stroke={G} strokeWidth="1.8" /></>,
  <><rect x="1.5" y="3.5" width="16" height="12.5" fill="#fff" stroke="#605e5c" /><text x="11" y="13.4" textAnchor="middle" fontFamily="Open Sans" fontSize="9" textLength="12" lengthAdjust="spacingAndGlyphs" fill="#2b88d8">123</text><path d="M4 -0.5 H8 L6 4 H8 L0.5 11.5 L2.5 6.5 H0 Z" fill="#ffd27a" stroke="#d9730d" /></>,
  <><path d="M6 1.5 H17.5 V17 H1.5 V12" fill="#fff" stroke={BS} /><path d="M6 17 C6 11 9 14 10 9 C11 6 11 3 17.5 3 V8 C13 9 15 15 10 17 Z" fill={LB} stroke={BS} /><path d="M0 0 H5.5 V6 L2.8 10.5 L0 6 Z" fill="#d9660d" /><circle cx="2.8" cy="3" r="1" fill="#f3f2f1" /><circle cx="15.3" cy="11.5" r="1.9" fill="#d9660d" /><circle cx="16" cy="16.3" r="2" fill="#d9660d" /></>,
  <><path d="M9 0.8 L12.8 4.8 L9 8.8 L5.2 4.8 Z M5 5 L8.8 9 L5 13 L1.2 9 Z M13 5 L16.8 9 L13 13 L9.2 9 Z M9 9.2 L12.8 13.2 L9 17.2 L5.2 13.2 Z" stroke="#8d3a96" strokeWidth="1.1" strokeLinejoin="round" /></>,
  <><path d="M3 2 H11 L17.5 9 L11 16 H1 L7 9 Z M0.5 5 H5 L8.5 9 L5 13 H0.5 L4 9 Z" fill="#fff" stroke="#2b88d8" strokeWidth="1.2" /></>,
  <path d="M2 8.5 H17" stroke="#605e5c" strokeWidth="1.4" strokeDasharray="1.6 4.6" />,
];

function Toggle({ on }: { on?: boolean }) {
  return on ? (
    <div className="flex h-4 w-8 items-center justify-between rounded-full bg-[#117865] pr-1 pl-[5px] text-[9.4px] leading-4 font-medium tracking-[-0.2px] text-white">
      On
      <span className="size-2 rounded-full bg-white" />
    </div>
  ) : (
    <div className="flex h-4 w-8 items-center justify-between rounded-full border border-[#8a8886] bg-white pr-[3px] pl-1 text-[9px] leading-[14px] tracking-[-0.2px] text-[#605e5c]">
      <span className="size-2 rounded-full bg-[#605e5c]" />
      Off
    </div>
  );
}

function Visualizations() {
  return (
    <aside className="flex w-[181px] shrink-0 flex-col border-l border-[#e1dfdd] bg-[#f3f2f1] text-[#252423]">
      <div className="flex h-[38px] items-center pl-2">
        <span className="w-[151px] text-[15.6px] leading-5 font-semibold tracking-[-0.36px]">Visualizations</span>
        <DoubleChevron />
      </div>
      <div className="pl-2 text-[11.8px] leading-4 font-medium">Build visual</div>
      <div className="mt-[3px] flex h-8 pl-2">
        <div className="flex size-8 items-center justify-center rounded-[2px] bg-[#d2d0ce]">
          <Svg w={24} h={26}>
            <path d="M0 1 H19" stroke="#252423" strokeWidth="1.3" />
            <path d="M0.5 5.5 H23.5 V12.5 H0.5 Z M0.5 16.5 H23.5 V24 H0.5 Z" fill="#117865" stroke="#252423" strokeDasharray="2 1" />
          </Svg>
        </div>
        <Svg w={25} h={25} className="mt-1 ml-[37px]">
          <path d="M7 23.5 H1.5 V1 H11 L17 7 V10 M11 1 V8 H17" stroke={G} strokeWidth="1.3" />
          <path d="M13.5 16 L22 8.5 C24 8 24 10 23.5 11 L16 19 Z M8 23.5 C11 22 10 19 13 17.5 C16 17 17 20 15.5 22 C13 24.5 10 24 8 23.5 Z" fill="#f3f2f1" stroke={G} strokeWidth="1.3" />
        </Svg>
      </div>
      <svg width="180" height="10" viewBox="0 0 180 10" fill="none" className="mt-1 block">
        <path d="M0 8.5 H16 L24.5 0.8 L33 8.5 H180" stroke="#979593" />
      </svg>
      <div className="mt-[10px] grid grid-cols-[repeat(6,18px)] gap-[10px] pl-[11px]">
        {vizIcons.map((icon, i) => (
          <svg key={i} width="18" height="18" viewBox="0 0 18 18" fill="none" className="overflow-visible">
            {icon}
          </svg>
        ))}
      </div>
      <div className="mt-[9px] h-px bg-[#e1dfdd]" />
      <div className="pl-3 text-[11.5px] leading-4">
        <div className="mt-[9px]">Values</div>
        <div className="mt-[5px] -ml-2 flex h-[28px] w-[170px] items-center rounded-[2px] border border-dashed border-[#c8c6c4] bg-white pt-px pl-[10px]">
          Add data fields here
        </div>
        <div className="mt-[11px] font-semibold tracking-[-0.1px] text-[#484644]">Drill through</div>
        <div className="mt-[9px] flex items-center">
          <span className="w-[114px]">Cross-report</span>
          <Toggle />
        </div>
        <div className="mt-[11px] flex items-center">
          <span className="w-[114px]">Keep all filters</span>
          <Toggle on />
        </div>
        <div className="mt-[10px] -ml-2 flex h-[26px] w-[170px] items-center rounded-[2px] border border-dashed border-[#c8c6c4] bg-white pt-px pl-2 whitespace-nowrap">
          Add drill-through fields here
        </div>
      </div>
    </aside>
  );
}

function TableRow({ name, open }: { name: string; open?: boolean }) {
  return (
    <div className="flex h-6 items-center pl-[7px]">
      <Svg w={12} h={12}>
        <path d={open ? "M0.8 3 L6 8.5 L11.2 3" : "M3 1 L8.5 6 L3 11"} stroke="#797775" strokeWidth="1.1" />
      </Svg>
      <span className="w-[3px]" />
      <TableGlyph />
      <span className="ml-[6px] text-[11.45px] leading-4 whitespace-nowrap">{name}</span>
    </div>
  );
}

function FieldRow({ name, sum }: { name: string; sum?: boolean }) {
  return (
    <div className="flex h-6 items-center pl-[38px]">
      <span className="-mt-[2px] size-3 rounded-[2px] border border-[#797775]" />
      <span className="flex w-[26px] pl-[9px]">
        {sum && (
          <Svg w={11} h={14}>
            <path d="M10 2.5 V0.6 H0.8 L6 7 L0.8 13.4 H10 V11.5" stroke="#484644" strokeWidth="1.1" />
          </Svg>
        )}
      </span>
      <span className="text-[11.4px] leading-4 whitespace-nowrap">{name}</span>
    </div>
  );
}

function DataPane() {
  return (
    <aside className="w-[181px] shrink-0 border-l border-[#e1dfdd] bg-[#f3f2f1] text-[#323130]">
      <div className="flex h-[38px] items-center pl-2 text-[#252423]">
        <span className="w-[152px] text-[15.6px] leading-5 font-semibold tracking-[-0.2px]">Data</span>
        <DoubleChevron />
      </div>
      <div className="mt-[7px] ml-1 flex h-[27px] w-[172px] items-center rounded-[2px] border border-[#605e5c] bg-white pl-[7px]">
        <Magnifier color="#605e5c" size={15} />
        <span className="mt-px ml-[7px] text-[12.8px]">Search</span>
      </div>
      <div className="mt-[10px]">
        <TableRow name="covid_reporting cases_..." open />
        <FieldRow name="cases_count" sum />
        <FieldRow name="country" />
        <FieldRow name="country_code_2_..." />
        <FieldRow name="country_code_3_..." />
        <FieldRow name="deaths_count" sum />
        <FieldRow name="population" sum />
        <FieldRow name="reported_date" />
        <FieldRow name="source" />
        <TableRow name="covid_reporting hospita..." />
        <TableRow name="covid_reporting testing" />
      </div>
    </aside>
  );
}

/* ---------- bottom bars ---------- */

function PageTabs() {
  return (
    <div className="flex h-[35px] bg-[#f3f2f1]">
      <div className="ml-[50px] flex w-6 flex-col items-center justify-between pt-[7px] pb-1">
        <Svg w={20} h={15}>
          <path d="M0.7 0.7 H19.3 V11 H0.7 Z M7 13.8 H13 M10 11 V14" stroke="#252423" strokeWidth="1.4" />
        </Svg>
        <div className="h-[3px] w-6 rounded bg-[#117865]" />
      </div>
      <Svg w={14} h={21} className="mt-[5px] ml-[25px]">
        <rect x="0.7" y="0.7" width="12" height="19" rx="1.2" stroke="#605e5c" strokeWidth="1.3" />
        <path d="M5.7 17 H7.7" stroke="#605e5c" strokeWidth="1.6" />
      </Svg>
      <Svg w={5} h={8} className="mt-[14px] ml-[20px]">
        <path d="M5 0 V8 L0 4 Z" fill="#c8c6c4" />
      </Svg>
      <Svg w={5} h={8} className="mt-[14px] ml-[17px]">
        <path d="M0 0 V8 L5 4 Z" fill="#c8c6c4" />
      </Svg>
      <div className="ml-[7px] w-[77px] border-b-4 border-l border-b-[#117865] border-l-[#8a8886] bg-white pt-[9px] pr-px text-center text-[11.6px] leading-[18px] font-semibold tracking-[-0.3px] text-[#252423]">
        Page 1
      </div>
      <div className="mt-[2px] flex h-8 w-[39px] items-center justify-center bg-[#117865]">
        <Svg w={12} h={12}>
          <path d="M6 1 V11 M1 6 H11" stroke="#fff" strokeWidth="2.6" />
        </Svg>
      </div>
    </div>
  );
}

function StatusBar() {
  return (
    <footer className="flex h-[24px] shrink-0 items-center border-t border-[#e1dfdd] bg-[#f3f2f1] text-[11.9px] leading-4 text-[#484644]">
      <span className="w-[1451px] pb-px pl-[5px] tracking-[-0.15px]">Page 1 of 1</span>
      <span className="w-[256px] pl-[5px] tracking-[-0.19px] whitespace-nowrap">Storage Mode: DirectQuery (click to change)</span>
      <Svg w={123} h={14}>
        <path d="M0 7.5 H5" stroke="#484644" strokeWidth="1.6" />
        <path d="M9 7 H109" stroke="#605e5c" />
        <rect x="59" y="1.5" width="4" height="11" fill="#605e5c" />
        <path d="M115 7 H122 M118.5 3.5 V10.5" stroke="#484644" strokeWidth="1.2" />
      </Svg>
      <span className="ml-[14px] w-[41px] pb-px tracking-[-0.5px]">110%</span>
      <Svg w={16} h={12}>
        <path d="M0.5 0.5 H15.5 V11.5 H0.5 Z M3 4.5 V2.8 H5.5 M10.5 2.8 H13 V4.5 M3 7.5 V9.2 H5.5 M10.5 9.2 H13 V7.5" stroke="#605e5c" />
      </Svg>
    </footer>
  );
}

function Taskbar() {
  return (
    <footer className="flex h-[41px] shrink-0 items-stretch border-t border-black bg-[linear-gradient(90deg,#22363f_0%,#22363f_60%,#1d2c40_75%,#1a2740_100%)] text-white">
      <div className="flex w-12 items-center justify-center">
        <Svg w={16} h={16}>
          <path d="M0 2.4 L6.6 1.5 V7.6 H0 Z M7.6 1.3 L16 0 V7.6 H7.6 Z M0 8.5 H6.6 V14.6 L0 13.7 Z M7.6 8.5 H16 V16 L7.6 14.8 Z" fill="#fff" />
        </Svg>
      </div>
      <div className="flex w-[344px] items-center border border-[#a5adb0] bg-[#f2f2f2] pl-[11px] text-[#3b3a39]">
        <Magnifier color="#252423" size={17} />
        <span className="mb-px ml-[11px] text-[14.6px] leading-5 tracking-[-0.2px]">Type here to search</span>
      </div>
      <div className="flex items-center pl-[16px]">
        <Svg w={17} h={16}>
          <path d="M0.5 0 V2.5 H10.5 V0 M0.5 5.5 H10.5 V10.5 H0.5 Z M0.5 16 V13.5 H10.5 V16 M14.5 0 V5 M14.5 10 V16" stroke="#fff" strokeWidth="1.2" />
          <rect x="13" y="6" width="3" height="3" fill="#fff" />
        </Svg>
      </div>
      <div className="ml-[22px] flex w-10 items-center justify-center border-b-2 border-[#76b9ed]">
        <Svg w={23} h={20}>
          <path d="M1 1 H9 L11 3 H21 V18 H1 Z" fill="#e8a317" />
          <path d="M1 5 H22 V18.5 H1 Z" fill="#ffd76a" />
          <path d="M5 19 V12 C5 10.5 6 10.5 7 10.5 H16 C17.5 10.5 18 11 18 12 V19 H14.5 V15 H8.5 V19 Z" fill="#3b8fd4" />
        </Svg>
      </div>
      <div className="ml-[18px] flex items-center">
        <Svg w={22} h={22}>
          <rect width="22" height="22" rx="1" fill="#21d789" />
          <path d="M3 0 H22 V22 H0 V10 Z" fill="#e8f03a" />
          <rect x="2.5" y="2.5" width="17" height="17" fill="#000" />
          <text x="4" y="11" fontFamily="Open Sans" fontWeight="700" fontSize="9" textLength="12" lengthAdjust="spacingAndGlyphs" fill="#fff">PC</text>
          <path d="M5 16 H11" stroke="#fff" strokeWidth="1.4" />
        </Svg>
      </div>
      <div className="ml-[26px] flex items-center">
        <Svg w={24} h={24}>
          <path d="M17 1 L23 4 V20 L17 23 L6.5 13 L2.5 16.2 L0.5 15 V9 L2.5 7.8 L6.5 11 Z" fill="#1f8ad2" />
          <path d="M17 7 V17 L10.5 12 Z" fill="#22363f" />
          <path d="M17 1 L23 4 V20 L17 23 Z" fill="#2ba3ef" />
        </Svg>
      </div>
      <div className="ml-[26px] flex items-center">
        <Svg w={24} h={24}>
          <circle cx="11" cy="11.5" r="11" fill="#8a12d8" />
          <path d="M2.5 10 C2.5 6 8 6 11 10 C14 6 19.5 6 19.5 10 C20 16 14 16 11 13.5 C8 16 2 16 2.5 10 Z" fill="#fff" />
          <circle cx="7.3" cy="11" r="2" fill="#8a12d8" />
          <circle cx="14.7" cy="11" r="2" fill="#8a12d8" />
          <circle cx="18.2" cy="18" r="5.3" fill="#ff5b36" />
          <path d="M15 14 C20 12 24 15 23.2 19 C22 16 19 15 15 14 Z" fill="#ffbd2e" />
          <circle cx="18" cy="18.5" r="2.5" fill="#9059ff" />
        </Svg>
      </div>
      <div className="ml-[12px] flex w-12 items-center justify-center border-b-2 border-[#76b9ed] bg-[#4d6068]">
        <Svg w={20} h={25}>
          <rect x="11" y="0.5" width="8.5" height="24" rx="1" fill="#d9930d" />
          <rect x="5.5" y="6.5" width="8.5" height="18" rx="1" fill="#efbb2b" />
          <path d="M1.5 12.5 H8 C9 12.5 9.5 13 9.5 14 V24.5 H1.5 C0.8 24.5 0.5 24 0.5 23.5 V13.5 C0.5 13 0.8 12.5 1.5 12.5 Z" fill="#f7d35b" />
        </Svg>
      </div>
      <div className="ml-auto flex items-center">
        <Svg w={24} h={16}>
          <path d="M0.8 0.8 H20 V15 H2.5 C1.2 15 0.8 14 0.8 13 Z M20 3.5 H23.2 V13 C23.2 14.5 22.5 15 21 15 H19 M3 4 H18 M12 7.5 H18 M12 10 H18 M12 12.5 H18 M4 7.5 H9.5 V12.3 H4 Z" stroke="#fff" strokeWidth="1.3" />
        </Svg>
        <Svg w={12} h={8} className="ml-[26px]">
          <path d="M0.8 7 L6 1.4 L11.2 7" stroke="#fff" strokeWidth="1.2" />
        </Svg>
        <Svg w={12} h={16} className="ml-[13px]">
          <path d="M1 4.5 H7.5 V12 H1 Z M7.5 7 L11 5 V11.5 L7.5 9.5 M2 1.5 C4 0 6 0 8.5 1.5 M2 14.8 C4 16 6 16 8.5 14.8" stroke="#fff" strokeWidth="1.1" />
        </Svg>
        <Svg w={17} h={14} className="ml-[9px]">
          <path d="M5 1.5 H16 V10 H5 V6 M9 13 H14 M11.5 10 V13 M0.5 1 H5 V5 H0.5 Z M2.5 5 V12.5 H9" stroke="#fff" strokeWidth="1.1" />
        </Svg>
        <Svg w={18} h={14} className="ml-[6px]">
          <path d="M0.6 4.8 H3 L6.5 1.5 V12.5 L3 9.2 H0.6 Z M9 4.5 C10.3 6 10.3 8 9 9.5 M11.5 2.8 C13.7 5 13.7 9 11.5 11.2 M14 1 C17.5 4 17.5 10 14 13" stroke="#fff" strokeWidth="1.1" />
        </Svg>
        <span className="ml-[9px] w-[24px] text-[11.7px] tracking-[-0.3px]">ENG</span>
        <div className="ml-[8px] flex w-[57px] flex-col text-center text-[11.7px] leading-[18px] tracking-[-0.35px] whitespace-nowrap">
          <span>12:48 AM</span>
          <span>9/20/2023</span>
        </div>
        <Svg w={17} h={16} className="ml-[17px]">
          <path d="M0.6 0.6 H16.4 V12.4 H10.5 L8.5 15 L6.5 12.4 H0.6 Z" stroke="#fff" strokeWidth="1.2" />
        </Svg>
        <div className="ml-[19px] h-full w-[5px] border-l border-[#6b7688]" />
      </div>
    </footer>
  );
}

export default function App() {
  return (
    <div className="relative flex h-[1080px] w-[1920px] flex-col overflow-hidden bg-[#f3f2f1] font-['Open_Sans',sans-serif]">
      <TitleBar />
      <Ribbon />
      <div className="flex h-[855px] shrink-0">
        <div className="flex w-[1558px] shrink-0 flex-col">
          <div className="flex h-[820px]">
            <LeftRail />
            <Canvas />
            <Filters />
          </div>
          <PageTabs />
        </div>
        <Visualizations />
        <DataPane />
      </div>
      <StatusBar />
      <Taskbar />
      <div className="absolute top-[944px] left-[1599px] whitespace-nowrap text-[#bfbebd]">
        <div className="text-[19.3px] leading-7 tracking-[-0.05px]">Activate Windows</div>
        <div className="text-[14.4px] leading-[18px]">Go to Settings to activate Windows.</div>
      </div>
    </div>
  );
}
